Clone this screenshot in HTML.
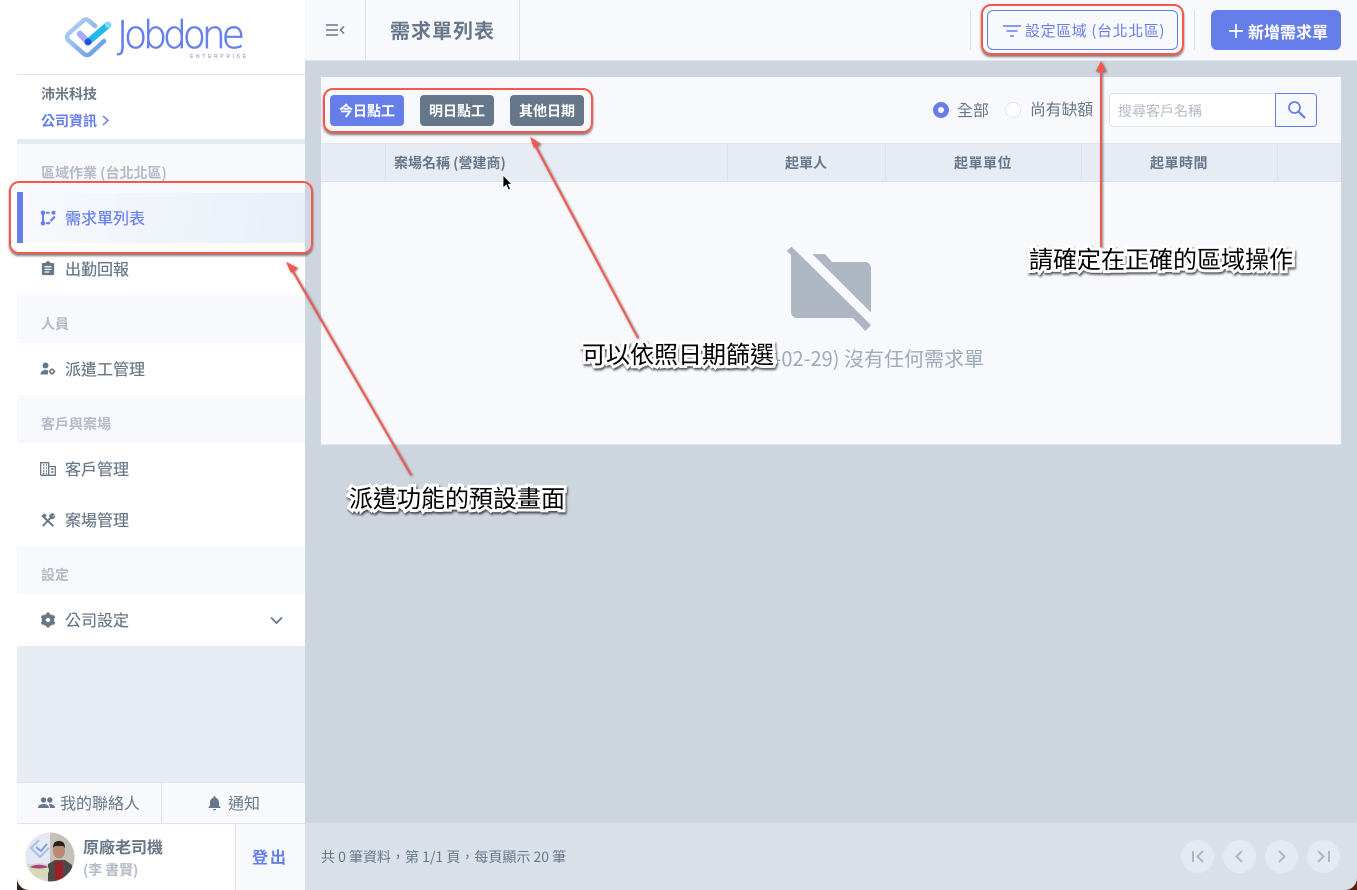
<!DOCTYPE html>
<html lang="zh-Hant">
<head>
<meta charset="utf-8">
<title>需求單列表</title>
<style>
html,body{margin:0;padding:0;background:#fff}
body{position:relative;width:1357px;height:890px;overflow:hidden;font-family:"Noto Sans CJK TC","Liberation Sans",sans-serif;color:#67778a}
.a{position:absolute;box-sizing:border-box}
.t{position:absolute;white-space:nowrap;line-height:1}
.sec{position:absolute;left:41px;font-size:14px;font-weight:700;color:#b3bbc5;white-space:nowrap;line-height:1}
.item{position:absolute;left:65px;font-size:16px;color:#67778a;white-space:nowrap;line-height:1;text-shadow:0 0 .4px currentColor}
.w{position:absolute;left:17px;width:288px;background:#fff}
.btn{position:absolute;top:95px;height:31px;width:74px;border-radius:4px;background:#67778a;color:#fff;font-size:14px;font-weight:700;text-align:center;line-height:33px}
.th{position:absolute;top:156px;font-size:14px;font-weight:700;color:#67778a;line-height:1;white-space:nowrap}
.vl{position:absolute;width:1px;background:#dde2ea}
.pg{position:absolute;top:840px;width:33px;height:33px;border-radius:50%;background:#e5eaf2}
.note{position:absolute;font-size:24px;line-height:1;color:#000;white-space:nowrap;-webkit-text-stroke:6px #fff;paint-order:stroke fill;filter:drop-shadow(1px 2px 1px rgba(0,0,0,.65))}
.red{position:absolute;box-sizing:border-box;border:2px solid #f4594c;border-radius:10px;box-shadow:0 2px 2px rgba(0,0,0,.5)}
</style>
</head>
<body>
<!-- main background -->
<div class="a" style="left:305px;top:60px;width:1052px;height:763px;background:#cdd5df"></div>

<!-- sidebar -->
<div class="a" style="left:17px;top:0;width:288px;height:890px;background:#f8f9fd"></div>
<div class="w" style="top:0;height:74px"></div>
<div class="a" style="left:17px;top:74px;width:288px;height:1px;background:#dfe4eb"></div>
<div class="w" style="top:75px;height:64px"></div>
<div class="a" style="left:17px;top:139px;width:288px;height:5px;background:#e6eaf1"></div>

<!-- logo -->
<svg class="a" style="left:60px;top:10px" width="195" height="55" viewBox="60 10 195 55">
  <defs>
    <linearGradient id="lg" x1="0" y1="0" x2="1" y2="1"><stop offset="0" stop-color="#bcd6f8"/><stop offset="1" stop-color="#5f97e6"/></linearGradient>
  </defs>
  <path d="M95 26 L88 20 Q86 18.500 84 20 L68 34 Q66 37 68 40 L84 54 Q87 56 90 54 L104 41" fill="none" stroke="url(#lg)" stroke-width="4.500" stroke-linecap="round"/>
  <path d="M80 34 L88 42" stroke="#a5aef5" stroke-width="6.500" stroke-linecap="round"/>
  <path d="M88 42 L108 25" stroke="#22b8ee" stroke-width="6.500" stroke-linecap="round"/>
  <circle cx="88" cy="42" r="3.500" fill="#1f57dd"/>
  <circle cx="108" cy="25" r="3" fill="#7fdcfa"/>
  <text x="117" y="48" font-family="DejaVu Sans" font-weight="200" font-size="38" fill="#6880ea" stroke="#6880ea" stroke-width=".7" textLength="128" lengthAdjust="spacing">Jobdone</text>
  <text x="190" y="58" font-family="Liberation Sans" font-size="5" fill="#a9b2bd" textLength="56" font-weight="700">ENTERPRISE</text>
</svg>

<div class="t" style="left:41px;top:87px;font-size:14px;font-weight:700;color:#67778a">沛米科技</div>
<div class="t" style="left:41px;top:114px;font-size:14px;font-weight:700;color:#667eea">公司資訊</div>
<svg class="a" style="left:101px;top:114px" width="9" height="13" viewBox="0 0 9 13"><path d="M2 2l5 4.500-5 4.500" fill="none" stroke="#667eea" stroke-width="1.500"/></svg>

<div class="sec" style="top:166px">區域作業 (台北北區)</div>
<div class="a" style="left:17px;top:193px;width:288px;height:50px;background:linear-gradient(100deg,#f8f9fd 0%,#e8eff9 100%)"></div>
<div class="a" style="left:17px;top:192px;width:6px;height:52px;background:#667eea"></div>
<svg class="a" style="left:40px;top:210px" width="16" height="16" viewBox="0 0 16 16" fill="#667eea"><circle cx="3" cy="2.800" r="2.300"/><circle cx="3" cy="13.200" r="2.300"/><circle cx="13.500" cy="2.800" r="2"/><path d="M2 3h2v10H2zM6 1.800h3.600v2H6zM6 12.300h2.200l1-1 1.500 1.500-1.500 1.400H6zM9.800 10.200l4.300-4.300 1.500 1.500-4.300 4.300z"/></svg>
<div class="item" style="top:209px;color:#667eea">需求單列表</div>

<div class="w" style="top:243px;height:52px"></div>
<svg class="a" style="left:41px;top:261px" width="14" height="15" viewBox="0 0 16 17"><path d="M2.500 2H5.500a2.600 2.600 0 015 0h3A1.500 1.500 0 0115 3.500v11a1.500 1.500 0 01-1.500 1.500h-11A1.500 1.500 0 011 14.500v-11A1.500 1.500 0 012.500 2z" fill="#67778a"/><path d="M4 6.500h8M4 9.500h8M4 12.500h5.500" stroke="#fff" stroke-width="1.300"/></svg>
<div class="item" style="top:260px">出勤回報</div>

<div class="sec" style="top:317px">人員</div>
<div class="w" style="top:343px;height:52px"></div>
<svg class="a" style="left:40px;top:362px" width="16" height="14" viewBox="0 0 16 14" fill="#67778a"><circle cx="5.500" cy="3.500" r="3"/><path d="M.5 12.500c0-3 2.500-4.500 5-4.500 1 0 1.800.2 2.500.6v3.900z"/><circle cx="12" cy="9.500" r="2" fill="none" stroke="#67778a" stroke-width="1.600"/><path d="M11.300 6.200h1.400v1.300h-1.400zM11.300 11.500h1.400v1.300h-1.400zM8.700 8.800H10v1.400H8.700zM14 8.800h1.300v1.400H14z"/></svg>
<div class="item" style="top:360px">派遣工管理</div>

<div class="sec" style="top:417px">客戶與案場</div>
<div class="w" style="top:443px;height:103px"></div>
<svg class="a" style="left:40px;top:462px" width="16" height="14" viewBox="0 0 16 14" fill="none" stroke="#67778a" stroke-width="1.300"><path d="M.7 13.300V.7h8v12.600M8.700 4.500h6.600v8.800H.7"/><path d="M3 3h1.500M6 3h1M3 6h1.500M6 6h1M3 9h1.500M6 9h1M3 11.500h1.500M6 11.500h1M11 7h2.500M11 10h2.500" stroke-width="1.600"/></svg>
<div class="item" style="top:460px">客戶管理</div>
<svg class="a" style="left:41px;top:513px" width="14" height="14" viewBox="0 0 16 16" fill="none" stroke="#67778a" stroke-width="2.200"><path d="M2 15L11 5.500M2.500 4L14 15"/><path d="M1 3.500L4 1l2 2-3 2.500zM10 4.500a3 3 0 014.800-3L12.500 4l1 1 2-1.500a3 3 0 01-4 3" fill="#67778a" stroke-width="1"/></svg>
<div class="item" style="top:511px">案場管理</div>

<div class="sec" style="top:568px">設定</div>
<div class="w" style="top:594px;height:52px"></div>
<svg class="a" style="left:40px;top:612px" width="16" height="16" viewBox="0 0 16 16"><circle cx="8" cy="8" r="4.800" fill="none" stroke="#67778a" stroke-width="3"/><path d="M8 .5v15M1.500 4.200l13 7.600M14.500 4.200l-13 7.600" stroke="#67778a" stroke-width="3"/><circle cx="8" cy="8" r="2.200" fill="#fff"/></svg>
<div class="item" style="top:611px">公司設定</div>
<svg class="a" style="left:270px;top:616px" width="13" height="9" viewBox="0 0 13 9"><path d="M1 1.500l5.500 5.500L12 1.500" fill="none" stroke="#67778a" stroke-width="1.800"/></svg>

<div class="a" style="left:17px;top:646px;width:288px;height:136px;background:#e7ebf3"></div>
<div class="a" style="left:17px;top:782px;width:288px;height:42px;background:#f8f9fd;border-top:1px solid #dfe4eb;border-bottom:1px solid #dfe4eb"></div>
<div class="a" style="left:161px;top:782px;width:1px;height:41px;background:#dfe4eb"></div>
<svg class="a" style="left:38px;top:797px" width="17" height="12" viewBox="0 0 17 12" fill="#67778a"><circle cx="5.500" cy="3" r="2.700"/><circle cx="11.800" cy="3" r="2.700"/><path d="M0 11c0-3 3-4 5.500-4s5.500 1 5.500 4zM12 11c0-1.500-.5-2.800-1.500-3.800 3-.5 6.500.5 6.500 3.800z"/></svg>
<div class="t" style="left:60px;top:794px;font-size:16px;color:#67778a">我的聯絡人</div>
<svg class="a" style="left:208px;top:796px" width="13" height="15" viewBox="0 0 13 15" fill="#67778a"><path d="M6.500 0a1 1 0 011 1v.7c2.300.5 3.500 2.400 3.500 4.800v3l1.500 1.700v.8H.5v-.8L2 9.500v-3C2 4.100 3.200 2.200 5.500 1.700V1a1 1 0 011-1zM5 13h3a1.500 1.500 0 01-3 0z"/></svg>
<div class="t" style="left:228px;top:794px;font-size:16px;color:#67778a">通知</div>

<div class="a" style="left:17px;top:824px;width:218px;height:66px;background:#fff"></div>
<div class="a" style="left:235px;top:824px;width:70px;height:66px;background:#f8f9fd;border-left:1px solid #dfe4eb"></div>
<!-- avatar -->
<svg class="a" style="left:25px;top:832px" width="50" height="50" viewBox="0 0 50 50">
  <defs><clipPath id="av"><circle cx="25" cy="25" r="24.500"/></clipPath></defs>
  <g clip-path="url(#av)">
    <rect width="50" height="50" fill="#d7d5cf"/>
    <rect x="0" y="0" width="28" height="32" fill="#e4e8f2"/>
    <path d="M14 8l-8 8 9 9 9-9" fill="none" stroke="#a8bfe6" stroke-width="2"/>
    <path d="M11 15l5 4 6-7" fill="none" stroke="#7d9fe0" stroke-width="2"/>
    <rect x="25" y="0" width="25" height="50" fill="#c4c1b8"/>
    <path d="M23 50V32l7-4h10l7 5v17z" fill="#4a4a48"/>
    <path d="M30 50V30h8v20z" fill="#9c1f2a"/>
    <ellipse cx="34" cy="19" rx="6" ry="7.500" fill="#b98a6f"/>
    <path d="M28 16c0-6 3-7 6-7s6 1 6 7l-2-2h-8z" fill="#26221f"/>
    <ellipse cx="14" cy="38" rx="10" ry="7" fill="#d5d9b6"/>
    <path d="M5 35c5-3 13-3 18 0-4 2-14 2-18 0z" fill="#a9418c"/>
  </g>
</svg>
<div class="t" style="left:83px;top:838px;font-size:16px;font-weight:700;color:#67778a">原廠老司機</div>
<div class="t" style="left:83px;top:863px;font-size:14px;font-weight:700;color:#b3bbc5;letter-spacing:-.1px">(李 書賢)</div>
<div class="t" style="left:252px;top:848px;font-size:16px;font-weight:700;color:#667eea;letter-spacing:2px">登出</div>

<!-- header -->
<div class="a" style="left:305px;top:0;width:1052px;height:61px;background:#f8f9fd;border-bottom:1px solid #e1e5ec"></div>
<div class="vl" style="left:365px;top:0;height:60px"></div>
<div class="vl" style="left:519px;top:0;height:60px"></div>
<div class="vl" style="left:970px;top:10px;height:40px"></div>
<div class="vl" style="left:1194px;top:10px;height:40px"></div>
<svg class="a" style="left:325px;top:23px" width="20" height="14" viewBox="0 0 20 14"><path d="M1 2h12M1 7h12M1 12h12M19 3.500L15.500 7l3.500 3.500" fill="none" stroke="#67778a" stroke-width="1.500"/></svg>
<div class="t" style="left:390px;top:20px;font-size:20px;font-weight:700;color:#67778a;letter-spacing:1px">需求單列表</div>

<div class="a" style="left:987px;top:10px;width:191px;height:40px;border:1px solid #667eea;border-radius:6px;background:#f8f9fd"></div>
<svg class="a" style="left:1003px;top:25px" width="18" height="12" viewBox="0 0 18 12"><path d="M0 1h18M3.500 6h11M7 11h4" stroke="#667eea" stroke-width="1.500"/></svg>
<div class="t" style="left:1025px;top:23px;font-size:15px;color:#667eea;letter-spacing:.6px">設定區域 (台北北區)</div>
<div class="a" style="left:1211px;top:10px;width:130px;height:40px;border-radius:6px;background:#667eea"></div>
<svg class="a" style="left:1229px;top:24px" width="14" height="14" viewBox="0 0 14 14"><path d="M7 0v14M0 7h14" stroke="#fff" stroke-width="1.700"/></svg>
<div class="t" style="left:1248px;top:23px;font-size:16px;font-weight:700;color:#fff">新增需求單</div>

<!-- card -->
<div class="a" style="left:321px;top:77px;width:1020px;height:368px;background:#f8f9fd;border-bottom:1px solid #e1e5ec"></div>
<div class="btn" style="left:330px;background:#667eea">今日點工</div>
<div class="btn" style="left:420px">明日點工</div>
<div class="btn" style="left:510px">其他日期</div>

<div class="a" style="left:933px;top:102px;width:16px;height:16px;border-radius:50%;background:#667eea"></div>
<div class="a" style="left:938px;top:107px;width:6px;height:6px;border-radius:50%;background:#fff"></div>
<div class="t" style="left:957px;top:101px;font-size:16px;color:#67778a">全部</div>
<div class="a" style="left:1005px;top:102px;width:16px;height:16px;border-radius:50%;background:#fff;border:1px solid #e1e5ec"></div>
<div class="t" style="left:1030px;top:101px;font-size:15.800px;color:#67778a">尚有缺額</div>
<div class="a" style="left:1109px;top:93px;width:167px;height:34px;background:#fff;border:1px solid #e1e5ec;border-radius:4px 0 0 4px"></div>
<div class="t" style="left:1118px;top:104px;font-size:14px;color:#b3bbc5">搜尋客戶名稱</div>
<div class="a" style="left:1275px;top:93px;width:42px;height:34px;background:#f8f9fd;border:1px solid #667eea;border-radius:0 4px 4px 0"></div>
<svg class="a" style="left:1287px;top:100px" width="19" height="19" viewBox="0 0 19 19"><circle cx="7.500" cy="7.500" r="5.500" fill="none" stroke="#667eea" stroke-width="1.800"/><path d="M11.500 11.500L18 18" stroke="#667eea" stroke-width="2.200"/></svg>

<div class="a" style="left:321px;top:143px;width:1020px;height:39px;background:#e7ebf3;border-top:1px solid #e1e5ec;border-bottom:1px solid #dde2ea"></div>
<div class="vl" style="left:385px;top:144px;height:37px"></div>
<div class="vl" style="left:727px;top:144px;height:37px"></div>
<div class="vl" style="left:885px;top:144px;height:37px"></div>
<div class="vl" style="left:1081px;top:144px;height:37px"></div>
<div class="vl" style="left:1277px;top:144px;height:37px"></div>
<div class="th" style="left:394px">案場名稱 (營建商)</div>
<div class="th" style="left:785px">起單人</div>
<div class="th" style="left:954px;letter-spacing:.5px">起單單位</div>
<div class="th" style="left:1150px;letter-spacing:.5px">起單時間</div>

<!-- empty state -->
<svg class="a" style="left:780px;top:240px" width="100" height="100" viewBox="780 240 100 100">
  <path d="M791 255V312a6 6 0 006 6H865a6 6 0 006-6V268a6 6 0 00-6-6H832l-7-8H806z" fill="#adb6c2"/>
  <path d="M786.700 250.700L791.700 246.700L871 325L865.500 331z" fill="#adb6c2"/>
  <path d="M791.700 246.700H805L871.500 313V325.500z" fill="#f8f9fd"/>
</svg>
<div class="t" style="right:373px;top:348px;font-size:20px;color:#9fabb9">今日 (2024-02-29) 沒有任何需求單</div>

<!-- footer -->
<div class="a" style="left:305px;top:823px;width:1052px;height:67px;background:#dae0e7"></div>
<div class="t" style="left:321px;top:850px;font-size:14px;color:#67778a">共 0 筆資料，第 1/1 頁，每頁顯示 20 筆</div>
<div class="pg" style="left:1181px"></div>
<div class="pg" style="left:1223px"></div>
<div class="pg" style="left:1265px"></div>
<div class="pg" style="left:1307px"></div>
<svg class="a" style="left:1181px;top:840px" width="160" height="33" viewBox="0 0 160 33" fill="none" stroke="#adb6c2" stroke-width="2"><path d="M12 11v11M22 11l-5.500 5.500L22 22"/><path d="M61 11l-5.500 5.500L61 22"/><path d="M98 11l5.500 5.500L98 22"/><path d="M137 11l5.500 5.500L137 22M148 11v11"/></svg>

<!-- window corners -->
<svg class="a" style="left:17px;top:878px" width="12" height="12" viewBox="0 0 12 12"><path d="M0 0v12h12A12 12 0 010 0z" fill="#2a2420"/></svg>
<svg class="a" style="left:1345px;top:878px" width="12" height="12" viewBox="0 0 12 12"><path d="M12 0v12H0A12 12 0 0012 0z" fill="#5c1d10"/></svg>

<!-- cursor -->
<svg class="a" style="left:502px;top:174px" width="12" height="18" viewBox="0 0 12 18"><path d="M1 1v13l3.200-3 2.300 5 2-.9-2.200-4.800H10z" fill="#000" stroke="#fff" stroke-width=".8"/></svg>

<!-- annotations -->
<div class="red" style="left:9px;top:181px;width:304px;height:73px"></div>
<div class="red" style="left:323px;top:88px;width:270px;height:45px"></div>
<div class="red" style="left:981px;top:4px;width:203px;height:51px"></div>
<svg class="a" style="left:0;top:0;filter:drop-shadow(1px 1px 1px rgba(0,0,0,.5))" width="1357" height="890" viewBox="0 0 1357 890">
  <g stroke="#f4594c" stroke-width="2" fill="#f4594c">
    <path d="M411 475L291 268" fill="none"/>
    <path d="M287 263l10 5-6 4z" stroke-width="1"/>
    <path d="M638 338L534 143" fill="none"/>
    <path d="M531 138l9 6-6 3z" stroke-width="1"/>
    <path d="M1101 248V68" fill="none"/>
    <path d="M1101 62l4.500 9h-9z" stroke-width="1"/>
  </g>
</svg>
<div class="note" style="left:582px;top:341px">可以依照日期篩選</div>
<div class="note" style="left:349px;top:485px">派遣功能的預設畫面</div>
<div class="note" style="left:1029px;top:246px">請確定在正確的區域操作</div>
</body>
</html>
